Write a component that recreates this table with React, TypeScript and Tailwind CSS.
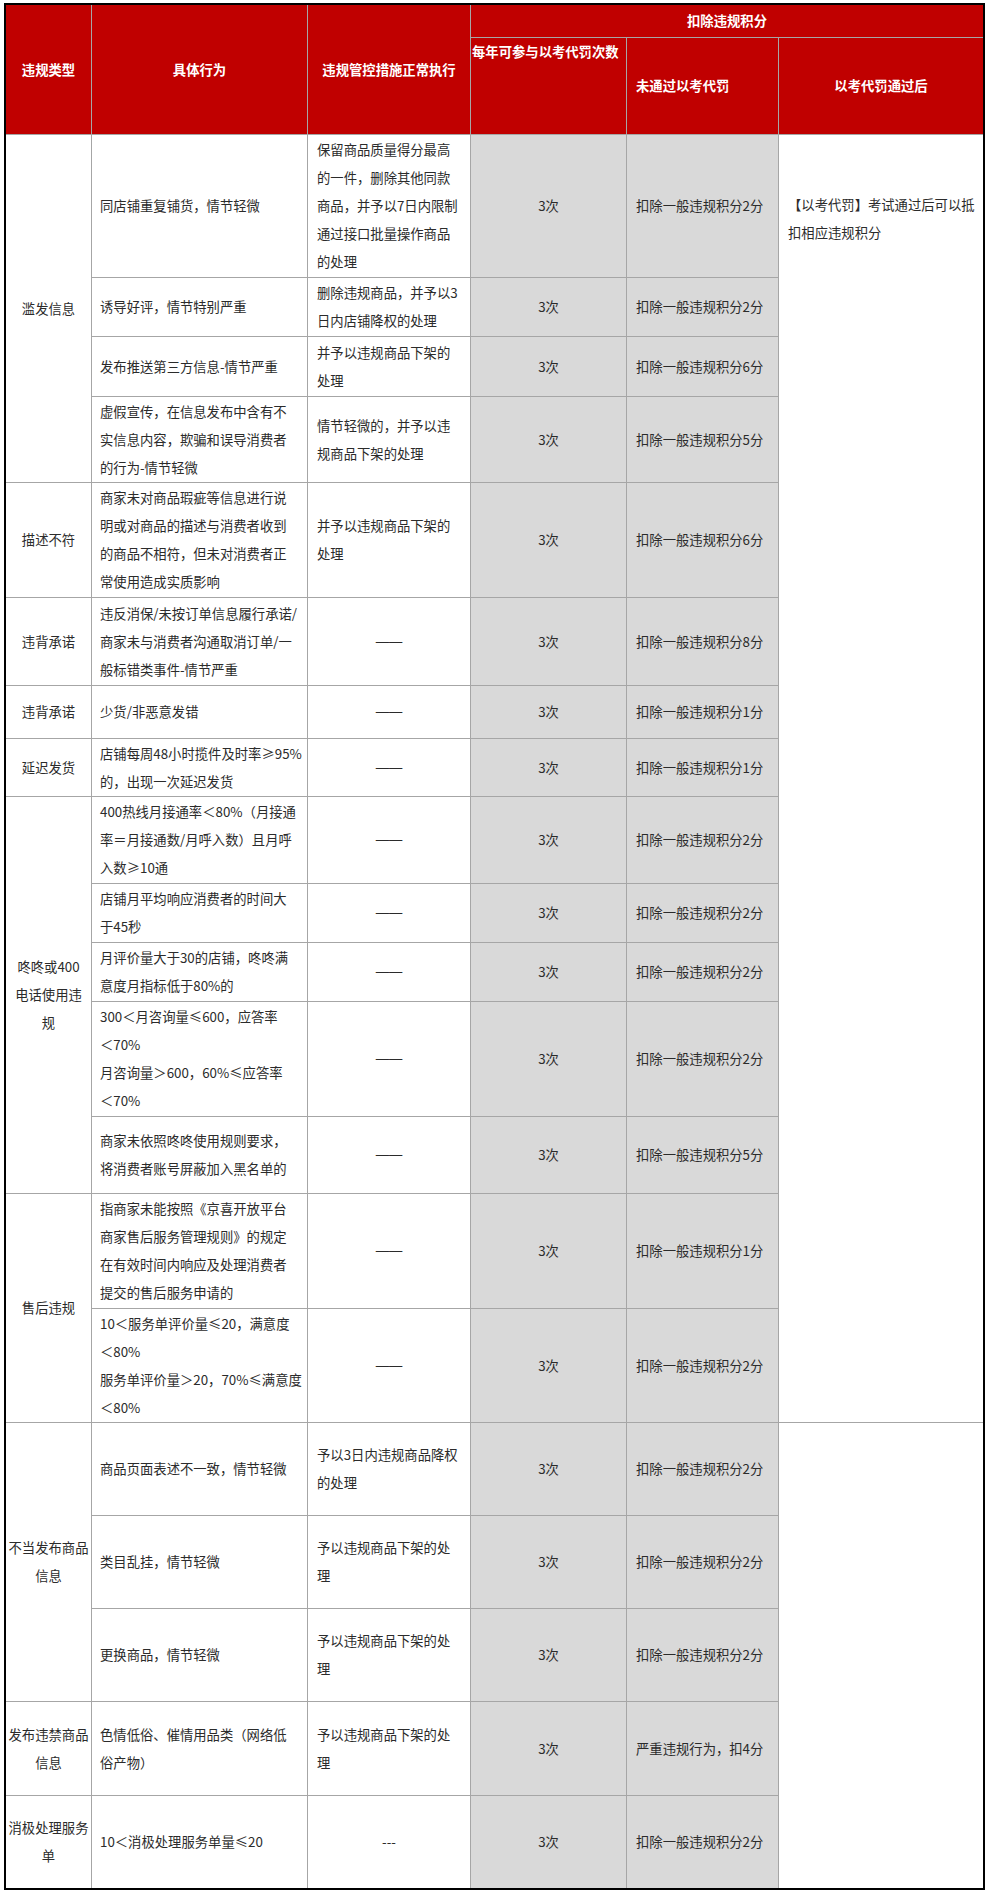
import React from 'react'

// 违规扣分规则表 - 京喜开放平台以考代罚对照

type Row = {
  cat?: { lines: string[]; span: number }
  behavior: string[]
  measure: string[] | null
  deduct: string
  last?: { span: number; lines: string[] }
}

const spanClass: Record<number, string> = {
  1: '',
  2: 'row-span-2',
  3: 'row-span-3',
  4: 'row-span-4',
  5: 'row-span-5',
  15: 'row-span-15',
}

const rows: Row[] = [
  {
    cat: { lines: ['滥发信息'], span: 4 },
    behavior: ['同店铺重复铺货，情节轻微'],
    measure: ['保留商品质量得分最高', '的一件，删除其他同款', '商品，并予以7日内限制', '通过接口批量操作商品', '的处理'],
    deduct: '扣除一般违规积分2分',
    last: { span: 15, lines: ['【以考代罚】考试通过后可以抵', '扣相应违规积分'] },
  },
  {
    behavior: ['诱导好评，情节特别严重'],
    measure: ['删除违规商品，并予以3', '日内店铺降权的处理'],
    deduct: '扣除一般违规积分2分',
  },
  {
    behavior: ['发布推送第三方信息-情节严重'],
    measure: ['并予以违规商品下架的', '处理'],
    deduct: '扣除一般违规积分6分',
  },
  {
    behavior: ['虚假宣传，在信息发布中含有不', '实信息内容，欺骗和误导消费者', '的行为-情节轻微'],
    measure: ['情节轻微的，并予以违', '规商品下架的处理'],
    deduct: '扣除一般违规积分5分',
  },
  {
    cat: { lines: ['描述不符'], span: 1 },
    behavior: ['商家未对商品瑕疵等信息进行说', '明或对商品的描述与消费者收到', '的商品不相符，但未对消费者正', '常使用造成实质影响'],
    measure: ['并予以违规商品下架的', '处理'],
    deduct: '扣除一般违规积分6分',
  },
  {
    cat: { lines: ['违背承诺'], span: 1 },
    behavior: ['违反消保/未按订单信息履行承诺/', '商家未与消费者沟通取消订单/一', '般标错类事件-情节严重'],
    measure: null,
    deduct: '扣除一般违规积分8分',
  },
  {
    cat: { lines: ['违背承诺'], span: 1 },
    behavior: ['少货/非恶意发错'],
    measure: null,
    deduct: '扣除一般违规积分1分',
  },
  {
    cat: { lines: ['延迟发货'], span: 1 },
    behavior: ['店铺每周48小时揽件及时率≥95%', '的，出现一次延迟发货'],
    measure: null,
    deduct: '扣除一般违规积分1分',
  },
  {
    cat: { lines: ['咚咚或400', '电话使用违', '规'], span: 5 },
    behavior: ['400热线月接通率＜80%（月接通', '率＝月接通数/月呼入数）且月呼', '入数≥10通'],
    measure: null,
    deduct: '扣除一般违规积分2分',
  },
  {
    behavior: ['店铺月平均响应消费者的时间大', '于45秒'],
    measure: null,
    deduct: '扣除一般违规积分2分',
  },
  {
    behavior: ['月评价量大于30的店铺，咚咚满', '意度月指标低于80%的'],
    measure: null,
    deduct: '扣除一般违规积分2分',
  },
  {
    behavior: ['300＜月咨询量≤600，应答率', '＜70%', '月咨询量＞600，60%≤应答率', '＜70%'],
    measure: null,
    deduct: '扣除一般违规积分2分',
  },
  {
    behavior: ['商家未依照咚咚使用规则要求，', '将消费者账号屏蔽加入黑名单的'],
    measure: null,
    deduct: '扣除一般违规积分5分',
  },
  {
    cat: { lines: ['售后违规'], span: 2 },
    behavior: ['指商家未能按照《京喜开放平台', '商家售后服务管理规则》的规定', '在有效时间内响应及处理消费者', '提交的售后服务申请的'],
    measure: null,
    deduct: '扣除一般违规积分1分',
  },
  {
    behavior: ['10＜服务单评价量≤20，满意度', '＜80%', '服务单评价量＞20，70%≤满意度', '＜80%'],
    measure: null,
    deduct: '扣除一般违规积分2分',
  },
  {
    cat: { lines: ['不当发布商品', '信息'], span: 3 },
    behavior: ['商品页面表述不一致，情节轻微'],
    measure: ['予以3日内违规商品降权', '的处理'],
    deduct: '扣除一般违规积分2分',
    last: { span: 5, lines: [] },
  },
  {
    behavior: ['类目乱挂，情节轻微'],
    measure: ['予以违规商品下架的处', '理'],
    deduct: '扣除一般违规积分2分',
  },
  {
    behavior: ['更换商品，情节轻微'],
    measure: ['予以违规商品下架的处', '理'],
    deduct: '扣除一般违规积分2分',
  },
  {
    cat: { lines: ['发布违禁商品', '信息'], span: 1 },
    behavior: ['色情低俗、催情用品类（网络低', '俗产物）'],
    measure: ['予以违规商品下架的处', '理'],
    deduct: '严重违规行为，扣4分',
  },
  {
    cat: { lines: ['消极处理服务', '单'], span: 1 },
    behavior: ['10＜消极处理服务单量≤20'],
    measure: ['---'],
    deduct: '扣除一般违规积分2分',
  },
]

function Lines({ lines }: { lines: string[] }) {
  return (
    <>
      {lines.map((l, i) => (
        <div key={i} className="whitespace-nowrap">
          {l}
        </div>
      ))}
    </>
  )
}

export default function App() {
  return (
    <div className="min-h-[1892px] bg-white pt-[3px] pl-[4px] font-['Microsoft_YaHei','Noto_Sans_CJK_SC',sans-serif] text-[13.33px] leading-[28px] text-[#2b2b2b]">
      <div className="w-[981px] border-2 border-black">
        <div className="grid grid-cols-[85px_215px_162px_155px_151px_204px] grid-rows-[32px_96px_142px_58px_59px_85px_114px_87px_52px_57px_86px_58px_58px_114px_76px_114px_113px_92px_92px_92px_93px_92px] gap-px bg-[#a6a6a6]">
          {/* Header */}
          <div className="row-span-2 flex items-center justify-center bg-[#c00000] font-bold text-white">违规类型</div>
          <div className="row-span-2 flex items-center justify-center bg-[#c00000] font-bold text-white">具体行为</div>
          <div className="row-span-2 flex items-center justify-center bg-[#c00000] font-bold text-white">违规管控措施正常执行</div>
          <div className="col-span-3 flex items-center justify-center bg-[#c00000] font-bold text-white">扣除违规积分</div>
          <div className="flex items-start bg-[#c00000] pl-px font-bold whitespace-nowrap text-white">每年可参与以考代罚次数</div>
          <div className="flex items-center bg-[#c00000] pl-[9px] font-bold text-white">未通过以考代罚</div>
          <div className="flex items-center justify-center bg-[#c00000] font-bold text-white">以考代罚通过后</div>

          {/* Body */}
          {rows.map((r, i) => (
            <React.Fragment key={i}>
              {r.cat && (
                <div className={`${spanClass[r.cat.span]} flex flex-col items-center justify-center bg-white text-center`}>
                  <Lines lines={r.cat.lines} />
                </div>
              )}
              <div className="flex flex-col justify-center bg-white pl-2">
                <Lines lines={r.behavior} />
              </div>
              {r.measure ? (
                r.measure[0] === '---' ? (
                  <div className="flex items-center justify-center bg-white">---</div>
                ) : (
                  <div className="flex flex-col justify-center bg-white pl-[9px]">
                    <Lines lines={r.measure} />
                  </div>
                )
              ) : (
                <div className="flex items-center justify-center bg-white font-['Liberation_Sans',sans-serif]">——</div>
              )}
              <div className="flex items-center justify-center bg-[#d9d9d9]">3次</div>
              <div className="flex items-center bg-[#d9d9d9] pl-[9px] whitespace-nowrap">{r.deduct}</div>
              {r.last && (
                <div className={`${spanClass[r.last.span]} bg-white pt-[56px] pl-[9px]`}>
                  <Lines lines={r.last.lines} />
                </div>
              )}
            </React.Fragment>
          ))}
        </div>
      </div>
    </div>
  )
}
